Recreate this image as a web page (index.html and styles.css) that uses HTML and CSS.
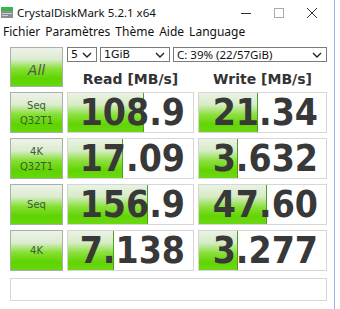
FILE: index.html
```html
<!DOCTYPE html>
<html>
<head>
<meta charset="utf-8">
<link rel="stylesheet" href="styles.css">
</head>
<body>
<div class="window">
  <div class="titlebar">
    <svg class="appicon" width="12" height="12" viewBox="0 0 12 12">
      <rect x="0" y="0" width="12" height="4" fill="#39b54a"/>
      <rect x="0" y="4" width="12" height="7" fill="#8a8f94"/>
      <rect x="1" y="6" width="10" height="1" fill="#c9cdd0"/>
      <rect x="1" y="8" width="6" height="1" fill="#c9cdd0"/>
    </svg>
    <span class="title">CrystalDiskMark 5.2.1 x64</span>
    <div class="controls">
      <svg width="12" height="12" viewBox="0 0 12 12"><line x1="1" y1="6.5" x2="11" y2="6.5" stroke="#333" stroke-width="1"/></svg>
      <svg width="12" height="12" viewBox="0 0 12 12"><rect x="1.5" y="1.5" width="9" height="9" fill="none" stroke="#aaa" stroke-width="1"/></svg>
      <svg width="12" height="12" viewBox="0 0 12 12"><path d="M1 1 L11 11 M11 1 L1 11" stroke="#333" stroke-width="1"/></svg>
    </div>
  </div>
  <div class="menubar">
    <span>Fichier</span><span>Paramètres</span><span>Thème</span><span>Aide</span><span>Language</span>
  </div>
  <div class="grid">
    <div class="btn all">All</div>
    <div class="topright">
      <div class="selects">
        <div class="sel s1"><span>5</span><svg width="10" height="6" viewBox="0 0 10 6"><path d="M1 1 L5 5 L9 1" fill="none" stroke="#222" stroke-width="1.4"/></svg></div>
        <div class="sel s2"><span>1GiB</span><svg width="10" height="6" viewBox="0 0 10 6"><path d="M1 1 L5 5 L9 1" fill="none" stroke="#222" stroke-width="1.4"/></svg></div>
        <div class="sel s3"><span>C: 39% (22/57GiB)</span><svg width="10" height="6" viewBox="0 0 10 6"><path d="M1 1 L5 5 L9 1" fill="none" stroke="#222" stroke-width="1.4"/></svg></div>
      </div>
      <div class="heads">
        <div class="head">Read [MB/s]</div>
        <div class="head">Write [MB/s]</div>
      </div>
    </div>

    <div class="btn label"><span>Seq</span><span>Q32T1</span></div>
    <div class="cell"><div class="bar" style="width:60%"></div><span class="num">108.9</span></div>
    <div class="cell"><div class="bar" style="width:46%"></div><span class="num">21.34</span></div>

    <div class="btn label"><span>4K</span><span>Q32T1</span></div>
    <div class="cell"><div class="bar" style="width:43%"></div><span class="num">17.09</span></div>
    <div class="cell"><div class="bar" style="width:30%"></div><span class="num">3.632</span></div>

    <div class="btn label"><span>Seq</span></div>
    <div class="cell"><div class="bar" style="width:63%"></div><span class="num">156.9</span></div>
    <div class="cell"><div class="bar" style="width:53%"></div><span class="num">47.60</span></div>

    <div class="btn label"><span>4K</span></div>
    <div class="cell"><div class="bar" style="width:36%"></div><span class="num">7.138</span></div>
    <div class="cell"><div class="bar" style="width:30%"></div><span class="num">3.277</span></div>

    <div class="comment"></div>
  </div>
</div>
</body>
</html>
```
FILE: styles.css
```css
html, body {
  margin: 0;
  padding: 0;
  background: #ffffff;
}
.window {
  width: 335px;
  height: 309px;
  border-right: 1px solid #8fb6de;
  background: #ffffff;
  box-sizing: border-box;
}
.titlebar {
  height: 22px;
  display: flex;
  align-items: center;
  padding: 2px 0 0 1px;
  box-sizing: border-box;
  font-family: "Noto Sans", sans-serif;
  font-size: 11.5px;
  color: #111;
}
.appicon {
  margin-top: 2px;
  margin-right: 4px;
}
.title {
  flex: 1;
}
.controls {
  display: flex;
  gap: 21px;
  margin-right: 16px;
  padding-top: 2px;
}
.menubar {
  height: 18px;
  display: flex;
  align-items: center;
  gap: 5px;
  padding-left: 3px;
  font-family: "Noto Sans", sans-serif;
  font-size: 12px;
  color: #111;
}
.grid {
  display: grid;
  grid-template-columns: 53px 127px 129px;
  grid-template-rows: 40px 41px 41px 41px 41px 25px;
  column-gap: 4px;
  row-gap: 5px;
  padding: 7px 0 0 10px;
}
.btn {
  box-sizing: border-box;
  border: 1px solid #a9b0a5;
  background: linear-gradient(to bottom, #eef2ea 0%, #dcecd0 30%, #86e034 55%, #5fd300 80%, #66d80c 100%);
  display: flex;
  flex-direction: column;
  align-items: center;
  justify-content: center;
  font-family: "DejaVu Sans", sans-serif;
  color: #3d5a30;
}
.all {
  font-size: 14px;
  font-style: italic;
  color: #555;
  padding-top: 6px;
}
.label {
  font-size: 10px;
  line-height: 15px;
  color: #3e5b31;
}
.topright {
  grid-column: 2 / 4;
  display: flex;
  flex-direction: column;
}
.selects {
  display: flex;
  gap: 3px;
  height: 15px;
}
.sel {
  box-sizing: border-box;
  height: 15px;
  border: 1px solid #7a7a7a;
  background: #fff;
  display: flex;
  align-items: center;
  justify-content: space-between;
  padding: 0 4px 0 3px;
  font-family: "DejaVu Sans", sans-serif;
  font-size: 11px;
  color: #111;
}
.s1 { width: 30px; }
.s2 { width: 70px; }
.s3 { flex: 1; font-family: "Noto Sans", sans-serif; font-size: 11.5px; }
.heads {
  flex: 1;
  display: grid;
  grid-template-columns: 127px 129px;
  column-gap: 4px;
}
.head {
  font-family: "DejaVu Sans", sans-serif;
  font-weight: bold;
  font-size: 14px;
  color: #333;
  text-align: center;
  padding-top: 9px;
}
.cell {
  position: relative;
  box-sizing: border-box;
  border: 1px solid #d6d6d6;
  background: #fff;
  display: flex;
  align-items: center;
  justify-content: flex-end;
  padding-right: 8px;
}
.bar {
  position: absolute;
  left: 0;
  top: 0;
  bottom: 0;
  border-right: 1px solid #4e9e22;
  background: linear-gradient(to bottom, #eaf2e4 0%, #d6ecc6 30%, #8ee040 55%, #62d404 80%, #6cd814 100%);
}
.num {
  position: relative;
  font-family: "DejaVu Sans Condensed", "DejaVu Sans", sans-serif;
  font-weight: bold;
  font-size: 37px;
  line-height: 39px;
  color: #383838;
}
.comment {
  grid-column: 1 / 4;
  box-sizing: border-box;
  border: 1px solid #d6d6d6;
  background: #fff;
  margin-top: 2px;
}
```
